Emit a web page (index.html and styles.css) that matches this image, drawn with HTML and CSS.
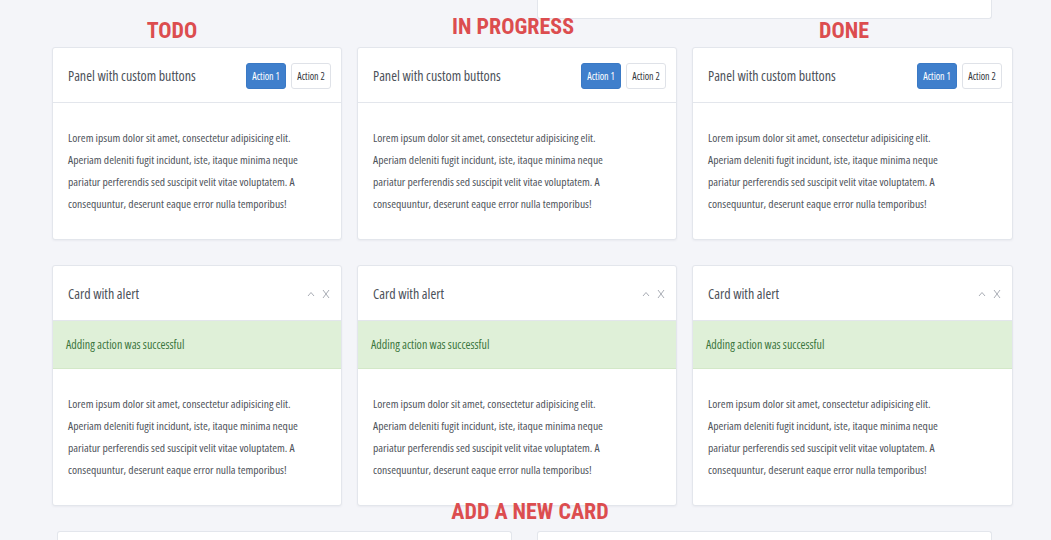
FILE: index.html
```html
<!DOCTYPE html>
<html lang="en">
<head>
<meta charset="utf-8">
<title>Board</title>
<link rel="stylesheet" href="styles.css">
</head>
<body>
<div class="pair pair-top">
  <div></div>
  <div class="box box-top"></div>
</div>

<div class="board">
  <section class="col">
    <h2 class="col-title t-todo">TODO</h2>
    <div class="card">
      <div class="card-head">
        <span class="card-title">Panel with custom buttons</span>
        <div class="btns"><button class="btn btn-primary">Action 1</button><button class="btn btn-default">Action 2</button></div>
      </div>
      <div class="card-body"><p>Lorem ipsum dolor sit amet, consectetur adipisicing elit. Aperiam deleniti fugit incidunt, iste, itaque minima neque pariatur perferendis sed suscipit velit vitae voluptatem. A consequuntur, deserunt eaque error nulla temporibus!</p></div>
    </div>
    <div class="card">
      <div class="card-head">
        <span class="card-title">Card with alert</span>
        <div class="tools">
          <svg class="ico-up" width="8" height="6" viewBox="0 0 8 6"><path d="M1 5 L4 1.5 L7 5" fill="none" stroke="#a9adb5" stroke-width="1"/></svg>
          <svg class="ico-x" width="8" height="10" viewBox="0 0 8 10"><path d="M1 1 L7 9 M7 1 L1 9" fill="none" stroke="#a9adb5" stroke-width="1"/></svg>
        </div>
      </div>
      <div class="alert">Adding action was successful</div>
      <div class="card-body"><p>Lorem ipsum dolor sit amet, consectetur adipisicing elit. Aperiam deleniti fugit incidunt, iste, itaque minima neque pariatur perferendis sed suscipit velit vitae voluptatem. A consequuntur, deserunt eaque error nulla temporibus!</p></div>
    </div>
  </section>

  <section class="col">
    <h2 class="col-title t-prog">IN PROGRESS</h2>
    <div class="card">
      <div class="card-head">
        <span class="card-title">Panel with custom buttons</span>
        <div class="btns"><button class="btn btn-primary">Action 1</button><button class="btn btn-default">Action 2</button></div>
      </div>
      <div class="card-body"><p>Lorem ipsum dolor sit amet, consectetur adipisicing elit. Aperiam deleniti fugit incidunt, iste, itaque minima neque pariatur perferendis sed suscipit velit vitae voluptatem. A consequuntur, deserunt eaque error nulla temporibus!</p></div>
    </div>
    <div class="card">
      <div class="card-head">
        <span class="card-title">Card with alert</span>
        <div class="tools">
          <svg class="ico-up" width="8" height="6" viewBox="0 0 8 6"><path d="M1 5 L4 1.5 L7 5" fill="none" stroke="#a9adb5" stroke-width="1"/></svg>
          <svg class="ico-x" width="8" height="10" viewBox="0 0 8 10"><path d="M1 1 L7 9 M7 1 L1 9" fill="none" stroke="#a9adb5" stroke-width="1"/></svg>
        </div>
      </div>
      <div class="alert">Adding action was successful</div>
      <div class="card-body"><p>Lorem ipsum dolor sit amet, consectetur adipisicing elit. Aperiam deleniti fugit incidunt, iste, itaque minima neque pariatur perferendis sed suscipit velit vitae voluptatem. A consequuntur, deserunt eaque error nulla temporibus!</p></div>
    </div>
  </section>

  <section class="col">
    <h2 class="col-title t-done">DONE</h2>
    <div class="card">
      <div class="card-head">
        <span class="card-title">Panel with custom buttons</span>
        <div class="btns"><button class="btn btn-primary">Action 1</button><button class="btn btn-default">Action 2</button></div>
      </div>
      <div class="card-body"><p>Lorem ipsum dolor sit amet, consectetur adipisicing elit. Aperiam deleniti fugit incidunt, iste, itaque minima neque pariatur perferendis sed suscipit velit vitae voluptatem. A consequuntur, deserunt eaque error nulla temporibus!</p></div>
    </div>
    <div class="card">
      <div class="card-head">
        <span class="card-title">Card with alert</span>
        <div class="tools">
          <svg class="ico-up" width="8" height="6" viewBox="0 0 8 6"><path d="M1 5 L4 1.5 L7 5" fill="none" stroke="#a9adb5" stroke-width="1"/></svg>
          <svg class="ico-x" width="8" height="10" viewBox="0 0 8 10"><path d="M1 1 L7 9 M7 1 L1 9" fill="none" stroke="#a9adb5" stroke-width="1"/></svg>
        </div>
      </div>
      <div class="alert">Adding action was successful</div>
      <div class="card-body"><p>Lorem ipsum dolor sit amet, consectetur adipisicing elit. Aperiam deleniti fugit incidunt, iste, itaque minima neque pariatur perferendis sed suscipit velit vitae voluptatem. A consequuntur, deserunt eaque error nulla temporibus!</p></div>
    </div>
  </section>
</div>

<h2 class="add-title">ADD A NEW CARD</h2>
<div class="pair pair-bottom">
  <div class="box box-bottom"></div>
  <div class="box box-bottom"></div>
</div>
</body>
</html>
```

FILE: styles.css
```css
* { box-sizing: border-box; }
html, body { margin: 0; padding: 0; }
body {
  background: #f4f5f9;
  width: 1051px;
  height: 540px;
  overflow: hidden;
  color: #50555c;
  font-family: "Open Sans", "Noto Sans", sans-serif;
  font-stretch: 75%;
}

/* two-column form area (above and below the board) */
.pair {
  display: grid;
  grid-template-columns: 455px 455px;
  column-gap: 25px;
  padding-left: 57px;
}
.box {
  background: #fff;
  border: 1px solid #e3e6ec;
  border-radius: 3px;
}
.box-top {
  height: 19px;
  border-top: 0;
  border-radius: 0 0 3px 3px;
}
.box-bottom {
  height: 9px;
  border-bottom: 0;
  border-radius: 3px 3px 0 0;
}
.pair-bottom { margin-top: 5px; }

/* board */
.board {
  display: grid;
  grid-template-columns: 290px 320px 321px;
  column-gap: 15px;
  padding-left: 52px;
  margin-top: -2px;
}
.col {
  display: flex;
  flex-direction: column;
}
.col-title,
.add-title {
  margin: 0;
  color: #dc4d4f;
  font-family: "Roboto", "Open Sans", sans-serif;
  font-stretch: 75%;
  font-weight: 700;
  font-size: 22px;
  line-height: 28px;
  height: 28px;
  text-align: center;
}
.t-todo { margin-left: -50px; }
.t-prog { margin-left: -8px; margin-top: -4px; margin-bottom: 4px; }
.t-done { margin-left: -17px; }

.card {
  background: #fff;
  border: 1px solid #e3e6ec;
  border-radius: 3px;
  box-shadow: 0 1px 2px rgba(30, 40, 70, 0.05);
  margin-top: 2px;
}
.card + .card { margin-top: 25px; }
.card-head {
  height: 55px;
  border-bottom: 1px solid #e3e6ec;
  display: flex;
  align-items: center;
  justify-content: space-between;
  padding: 0 10px 0 15px;
}
.card-title {
  font-size: 14px;
  color: #4c5159;
}
.btns {
  display: flex;
  gap: 5px;
  margin-top: 1px;
}
.btn {
  font: inherit;
  font-size: 10px;
  height: 26px;
  width: 40px;
  padding: 0;
  border-radius: 3px;
  cursor: pointer;
}
.btn-primary {
  background: #3f7fcc;
  border: 1px solid #3a79c5;
  color: #fff;
}
.btn-default {
  background: #fff;
  border: 1px solid #dfe2e8;
  color: #33373d;
}
.tools {
  display: flex;
  align-items: center;
  gap: 7px;
  padding-right: 1px;
  margin-top: 2px;
}
.alert {
  background: #dff0d8;
  color: #3c763d;
  height: 48px;
  display: flex;
  align-items: center;
  padding: 0 13px;
  font-size: 12px;
  border-bottom: 1px solid #d3e8c8;
}
.card-body {
  padding: 24px 15px;
  height: 136px;
}
.card-body p {
  margin: 0;
  max-width: 258px;
  font-size: 11.6px;
  line-height: 22px;
  color: #4f545b;
}
.add-title {
  margin-top: -8px;
  padding-left: 9px;
}
```
